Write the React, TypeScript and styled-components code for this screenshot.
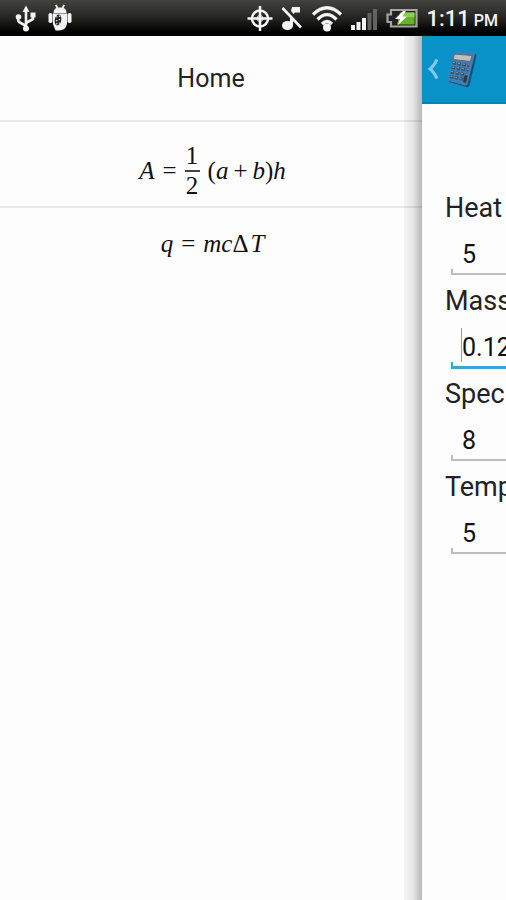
import React, { useState } from "react";
import styled, { createGlobalStyle } from "styled-components";

const GlobalStyle = createGlobalStyle`
  * { box-sizing: border-box; }
  body { margin: 0; background: #fdfdfd; font-family: Roboto, sans-serif; color: #222; }
`;

const Screen = styled.div`
  display: flex;
  flex-direction: column;
  min-height: 100vh;
`;

const StatusBar = styled.header`
  display: flex;
  align-items: center;
  height: 36px;
  padding: 0 8px 0 14px;
  background: linear-gradient(#434340, #242422 50%, #000 90%);
  color: #f4f4f4;
`;

const StatusGroup = styled.div<{ $end?: boolean }>`
  display: flex;
  align-items: center;
  gap: ${(p) => (p.$end ? 8 : 10)}px;
  margin-left: ${(p) => (p.$end ? "auto" : "0")};
  svg { display: block; flex: none; }
`;

const Clock = styled.time`
  padding-top: 4px;
  font-size: 22px;
  font-weight: 500;
  line-height: 28px;
  white-space: nowrap;
  small { margin-left: 4px; font-size: 16px; }
`;

const Stage = styled.div`
  display: flex;
  flex: 1;
  overflow: hidden;
`;

const Drawer = styled.nav`
  flex: 1;
  min-width: 0;
`;

const DrawerItem = styled.a<{ $last?: boolean }>`
  display: flex;
  align-items: center;
  justify-content: center;
  height: ${(p) => (p.$last ? 72 : 86)}px;
  border-bottom: ${(p) => (p.$last ? "0" : "2px solid #e8e8e8")};
  color: #222;
  font-size: 25px;
  text-decoration: none;
`;

const Formula = styled.span<{ $tall?: boolean }>`
  display: flex;
  align-items: center;
  gap: 8px;
  padding: ${(p) => (p.$tall ? 14 : 0)}px 0 0 3px;
  font-family: "Liberation Serif", serif;
  font-size: 25px;
  line-height: 28px;
  color: #111;
`;

const Fraction = styled.span`
  display: flex;
  flex-direction: column;
  align-items: center;
  width: 15px;
  span + span { border-top: 2px solid #444; width: 100%; text-align: center; }
`;

const Group = styled.span<{ $gap: number }>`
  display: flex;
  gap: ${(p) => p.$gap}px;
`;

const Page = styled.main`
  position: relative;
  flex: 0 0 84px;
  min-width: 0;
  background: #fdfdfd;
  &::before {
    content: "";
    position: absolute;
    top: 0;
    bottom: 0;
    right: 100%;
    width: 18px;
    background: linear-gradient(90deg, rgba(0, 0, 0, 0.03), rgba(0, 0, 0, 0.09) 50%, rgba(0, 0, 0, 0.28));
  }
`;

const ActionBar = styled.button`
  display: flex;
  align-items: center;
  gap: 7px;
  width: 100%;
  height: 68px;
  padding: 0 5px;
  border: 0;
  border-bottom: 2px solid #0882b2;
  background: #0892c7;
  svg { display: block; flex: none; }
`;

const Form = styled.form`
  padding: 88px 0 0 23px;
  overflow: hidden;
`;

const Field = styled.div`
  height: 93px;
`;

const Label = styled.label`
  display: block;
  font-size: 27px;
  line-height: 33px;
  white-space: nowrap;
`;

const InputFrame = styled.div<{ $active: boolean }>`
  position: relative;
  width: 400px;
  margin-left: 6px;
  border-bottom: ${(p) => (p.$active ? "3px solid #3ba5d2" : "2px solid #bdbdbd")};
  &::before {
    content: "";
    position: absolute;
    left: 0;
    bottom: 0;
    width: 2px;
    height: 4px;
    background: ${(p) => (p.$active ? "#3ba5d2" : "#bdbdbd")};
  }
`;

const Caret = styled.span`
  position: absolute;
  left: 10px;
  top: 10px;
  width: 1px;
  height: 34px;
  background: #999;
`;

const Input = styled.input`
  display: block;
  width: 100%;
  height: 48px;
  padding: 11px 11px 0;
  border: 0;
  outline: 0;
  background: transparent;
  color: #111;
  font: 25px Roboto, sans-serif;
`;

const UsbIcon = () => (
  <svg width="24" height="30" viewBox="0 0 24 30" fill="none" stroke="#f4f4f4" strokeWidth="2.6">
    <path d="M12 7V26M12 23L5 19Q4 18 4 15M12 20L19 16V13" />
    <path d="M8.500 9L12 2.500 15.500 9Z" fill="#f4f4f4" stroke="none" />
    <circle cx="4.500" cy="14" r="2.800" fill="#f4f4f4" stroke="none" />
    <rect x="16.500" y="9.500" width="5" height="5" fill="#f4f4f4" stroke="none" />
    <circle cx="12" cy="25.500" r="3" fill="#f4f4f4" stroke="none" />
  </svg>
);

const DroidIcon = () => (
  <svg width="24" height="30" viewBox="0 0 24 30" fill="#f4f4f4">
    <path d="M5.500 10Q5.500 6 8.500 5L7 2.500 8.500 1.500 10.200 4.500H13.800L15.500 1.500 17 2.500 15.500 5Q18.500 6 18.500 10Z" />
    <path d="M5 10.500H19V21Q17.500 27.500 11 27.500H7.500L5 21Z" />
    <rect x="0.500" y="10" width="4" height="10" rx="1.800" />
    <rect x="19.500" y="10" width="4" height="10" rx="1.800" />
    <ellipse cx="10" cy="17" rx="3.300" ry="5.500" fill="#222" transform="rotate(12 10 17)" />
    <path d="M8 14L13 13M8 18L13 16M8 21L12 20" stroke="#f4f4f4" strokeWidth="1.100" strokeDasharray="1.500 1.500" />
  </svg>
);

const TargetIcon = () => (
  <svg width="26" height="30" viewBox="0 0 26 30" fill="none" stroke="#f4f4f4" strokeWidth="2.500">
    <circle cx="13" cy="15.500" r="8" />
    <path d="M13 3V28M0.500 15.500H25.500" />
    <circle cx="13" cy="15.500" r="3" strokeWidth="1" />
  </svg>
);

const MutedNoteIcon = () => (
  <svg width="22" height="30" viewBox="0 0 22 30">
    <path d="M9 22V12L12 15V22" fill="#f4f4f4" />
    <path d="M10 8L11 4H19V9.500H14L12.500 11Z" fill="#f4f4f4" />
    <ellipse cx="6.500" cy="22.500" rx="5.500" ry="4.500" fill="#f4f4f4" />
    <path d="M1.500 5L20 24.500" stroke="#f4f4f4" strokeWidth="2.600" />
  </svg>
);

const WifiIcon = () => (
  <svg width="32" height="30" viewBox="0 0 32 30" fill="none" stroke="#f4f4f4" strokeWidth="3.200">
    <path d="M2 11.500Q16 -2 30 11.500M6.500 16.500Q16 7 25.500 16.500M11 21Q16 16 21 21" />
    <circle cx="16" cy="24.500" r="4" fill="#f4f4f4" stroke="none" />
  </svg>
);

const SignalIcon = () => (
  <svg width="27" height="30" viewBox="0 0 27 30" fill="#f4f4f4">
    <rect x="0" y="22" width="4" height="5" />
    <rect x="5.500" y="19" width="4" height="8" />
    <rect x="11" y="15" width="4" height="12" />
    <rect x="16.500" y="10" width="4" height="17" fill="#636361" />
    <rect x="22" y="6" width="4" height="21" fill="#636361" />
  </svg>
);

const BatteryIcon = () => (
  <svg width="32" height="30" viewBox="0 0 32 30">
    <path d="M5 7H30.500V23.500H5V19H1.500V11.500H5Z" fill="#222" stroke="#a5a5a2" strokeWidth="2.200" />
    <path d="M14 9.500H28.500V21.500H11Z" fill="#64b526" />
    <path d="M17 9.500H28.500V14H15Z" fill="#8bd04c" />
    <path d="M17 8L9 16H14L12 22 21 13.500H16L20 8Z" fill="#fff" />
  </svg>
);

const BackChevron = () => (
  <svg width="12" height="24" viewBox="0 0 12 24" fill="none" stroke="#82cbec" strokeWidth="3">
    <path d="M10 2.500Q7 9 3 12Q7 15 10 21.500" />
  </svg>
);

const CalculatorIcon = () => (
  <svg width="32" height="38" viewBox="0 0 32 38">
    <path d="M8.500 3L29 3.500Q31 4 30.500 6L23.500 35Q22.500 38 20.500 37L3 32Z" fill="#174d78" />
    <path d="M7.500 2Q8 1 9.500 1L28 2Q29.500 2.500 29 4L21.500 34Q21 36 19 35.500L3 31Q1.500 30.500 2 29Z" fill="#3e7fb8" />
    <path d="M8.500 4L26 5.500 24.500 11.500 7 9.500Z" fill="#c3c0bb" stroke="#5d6971" />
    <g stroke="#31506d" strokeWidth="3" strokeDasharray="3.500 1.500">
      <path d="M6.500 13L23.500 15.500M5.700 17.500L22.500 20M4.800 22L21.500 25M4 26.500L20.500 30" />
    </g>
    <g stroke="#9b9c99" strokeWidth="1" strokeDasharray="2 3">
      <path d="M7 12.500L23.500 15M6.200 17L22.500 19.500M5.300 21.500L21.500 24.500M4.500 26L15.500 29" />
    </g>
    <path d="M18.500 25.500L21.500 26 20 33 17 32Z" fill="#3a3438" />
  </svg>
);

const fields = [
  { id: "heat", label: "Heat", value: "5" },
  { id: "mass", label: "Mass", value: "0.12" },
  { id: "specific", label: "Specific Heat", value: "8" },
  { id: "temperature", label: "Temperature", value: "5" },
];

export default function App() {
  const [active, setActive] = useState("mass");
  return (
    <Screen>
      <GlobalStyle />
      <StatusBar>
        <StatusGroup>
          <UsbIcon />
          <DroidIcon />
        </StatusGroup>
        <StatusGroup $end>
          <TargetIcon />
          <MutedNoteIcon />
          <WifiIcon />
          <SignalIcon />
          <BatteryIcon />
          <Clock>1:11<small>PM</small></Clock>
        </StatusGroup>
      </StatusBar>
      <Stage>
        <Drawer>
          <DrawerItem href="#home">Home</DrawerItem>
          <DrawerItem href="#area">
            <Formula $tall>
              <i>A</i>
              <span>=</span>
              <Fraction><span>1</span><span>2</span></Fraction>
              <Group $gap={5}>
                <span>(<i>a</i></span>
                <span>+</span>
                <span><i>b</i>)<i>h</i></span>
              </Group>
            </Formula>
          </DrawerItem>
          <DrawerItem href="#heat" $last>
            <Formula>
              <i>q</i>
              <span>=</span>
              <Group $gap={2}>
                <span><i>mc</i>Δ</span>
                <i>T</i>
              </Group>
            </Formula>
          </DrawerItem>
        </Drawer>
        <Page>
          <ActionBar type="button" aria-label="Back">
            <BackChevron />
            <CalculatorIcon />
          </ActionBar>
          <Form>
            {fields.map((f) => (
              <Field key={f.id}>
                <Label htmlFor={f.id}>{f.label}</Label>
                <InputFrame $active={active === f.id}>
                  {active === f.id && <Caret />}
                  <Input id={f.id} defaultValue={f.value} onFocus={() => setActive(f.id)} />
                </InputFrame>
              </Field>
            ))}
          </Form>
        </Page>
      </Stage>
    </Screen>
  );
}
